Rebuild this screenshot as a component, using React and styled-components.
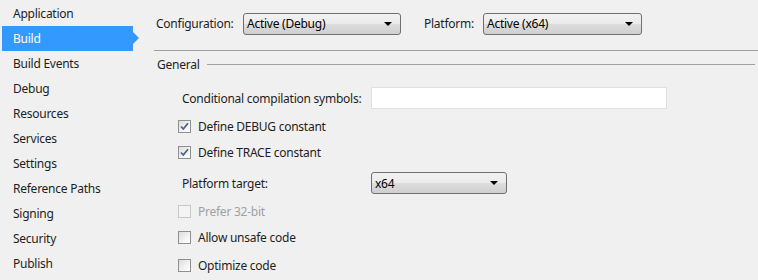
import styled, { createGlobalStyle } from "styled-components";

const GlobalStyle = createGlobalStyle`
  html, body {
    margin: 0;
    padding: 0;
    background: #f0f0f0;
  }
  body {
    font-family: "Noto Sans", "Open Sans", sans-serif;
    font-size: 12px;
    letter-spacing: -0.25px;
    color: #1e1e1e;
  }
`;

const navItems = [
  "Application",
  "Build",
  "Build Events",
  "Debug",
  "Resources",
  "Services",
  "Settings",
  "Reference Paths",
  "Signing",
  "Security",
  "Publish",
];

function Check({ checked, disabled }) {
  return (
    <Box $disabled={disabled}>
      {checked && (
        <svg width="9" height="9" viewBox="0 0 9 9">
          <path d="M1 4.5 L3.3 7 L8 1.2" fill="none" stroke="#4a5d8c" strokeWidth="1.7" />
        </svg>
      )}
    </Box>
  );
}

function Combo({ value, width }) {
  return (
    <ComboBox $width={width}>
      <span>{value}</span>
      <Caret />
    </ComboBox>
  );
}

export default function App() {
  return (
    <>
      <GlobalStyle />
      <Page>
        <Sidebar>
          {navItems.map((item) => (
            <NavItem key={item} $active={item === "Build"}>
              {item}
            </NavItem>
          ))}
        </Sidebar>
        <Main>
          <Toolbar>
            <Label $width={87}>Configuration:</Label>
            <Combo value="Active (Debug)" width={158} />
            <Label $gap={23} $width={59}>Platform:</Label>
            <Combo value="Active (x64)" width={159} />
          </Toolbar>
          <Section>
            <SectionTitle>General</SectionTitle>
          </Section>
          <Form>
            <FieldRow $top={10}>
              <FieldLabel>Conditional compilation symbols:</FieldLabel>
              <TextBox />
            </FieldRow>
            <CheckRow $top={7}>
              <Check checked />
              Define DEBUG constant
            </CheckRow>
            <CheckRow $top={6}>
              <Check checked />
              Define TRACE constant
            </CheckRow>
            <FieldRow $top={10}>
              <FieldLabel>Platform target:</FieldLabel>
              <Combo value="x64" width={136} />
            </FieldRow>
            <CheckRow $top={7} $disabled>
              <Check disabled />
              Prefer 32-bit
            </CheckRow>
            <CheckRow $top={6}>
              <Check />
              Allow unsafe code
            </CheckRow>
            <CheckRow $top={8}>
              <Check />
              Optimize code
            </CheckRow>
          </Form>
        </Main>
      </Page>
    </>
  );
}

const Page = styled.div`
  display: flex;
  width: 758px;
  height: 280px;
  overflow: hidden;
  background: #f0f0f0;
`;

const Sidebar = styled.div`
  width: 154px;
  flex-shrink: 0;
  padding-top: 1px;
`;

const NavItem = styled.div`
  position: relative;
  height: 25px;
  width: 131px;
  margin-left: 2px;
  padding-left: 11px;
  box-sizing: border-box;
  display: flex;
  align-items: center;
  background: ${(p) => (p.$active ? "#3399ff" : "transparent")};
  color: ${(p) => (p.$active ? "#ffffff" : "#1e1e1e")};

  &::after {
    content: "";
    display: ${(p) => (p.$active ? "block" : "none")};
    position: absolute;
    right: -6px;
    top: 6px;
    border-left: 6px solid #3399ff;
    border-top: 6px solid transparent;
    border-bottom: 6px solid transparent;
  }
`;

const Main = styled.div`
  flex: 1;
  display: flex;
  flex-direction: column;
`;

const Toolbar = styled.div`
  height: 51px;
  display: flex;
  align-items: center;
  padding-left: 2px;
  padding-bottom: 3px;
  box-sizing: border-box;
  border-bottom: 1px solid #a0a0a0;
`;

const Label = styled.span`
  width: ${(p) => p.$width}px;
  flex-shrink: 0;
  margin-left: ${(p) => p.$gap || 0}px;
`;

const ComboBox = styled.div`
  width: ${(p) => p.$width}px;
  height: 22px;
  box-sizing: border-box;
  border: 1px solid #707070;
  border-radius: 3px;
  background: linear-gradient(to bottom, #f2f2f2 0%, #ebebeb 50%, #dddddd 51%, #cfcfcf 100%);
  display: flex;
  align-items: center;
  justify-content: space-between;
  padding: 0 8px 0 3px;
  color: #000;
`;

const Caret = styled.span`
  width: 0;
  height: 0;
  border-left: 4px solid transparent;
  border-right: 4px solid transparent;
  border-top: 4px solid #000;
`;

const Section = styled.div`
  height: 26px;
  display: flex;
  align-items: center;
  padding-left: 3px;
  margin-right: 3px;

  &::after {
    content: "";
    flex: 1;
    height: 1px;
    background: #a0a0a0;
    margin-left: 8px;
  }
`;

const SectionTitle = styled.span``;

const Form = styled.div`
  display: flex;
  flex-direction: column;
  padding-left: 24px;
`;

const FieldRow = styled.div`
  display: grid;
  grid-template-columns: 193px auto;
  align-items: center;
  height: 22px;
  margin-top: ${(p) => p.$top}px;
`;

const FieldLabel = styled.span`
  padding-left: 4px;
  white-space: nowrap;
`;

const TextBox = styled.div`
  width: 296px;
  height: 22px;
  box-sizing: border-box;
  background: #ffffff;
  border: 1px solid #dde1e6;
`;

const CheckRow = styled.div`
  display: flex;
  align-items: center;
  gap: 7px;
  height: 20px;
  margin-top: ${(p) => p.$top}px;
  color: ${(p) => (p.$disabled ? "#a0a0a0" : "#1e1e1e")};
`;

const Box = styled.span`
  width: 13px;
  height: 13px;
  box-sizing: border-box;
  border: 1px solid ${(p) => (p.$disabled ? "#c8c8c8" : "#8e8f8f")};
  background: ${(p) =>
    p.$disabled ? "#f4f4f4" : "linear-gradient(135deg, #dcdcdc 0%, #f4f4f4 60%, #ffffff 100%)"};
  display: flex;
  align-items: center;
  justify-content: center;
`;
